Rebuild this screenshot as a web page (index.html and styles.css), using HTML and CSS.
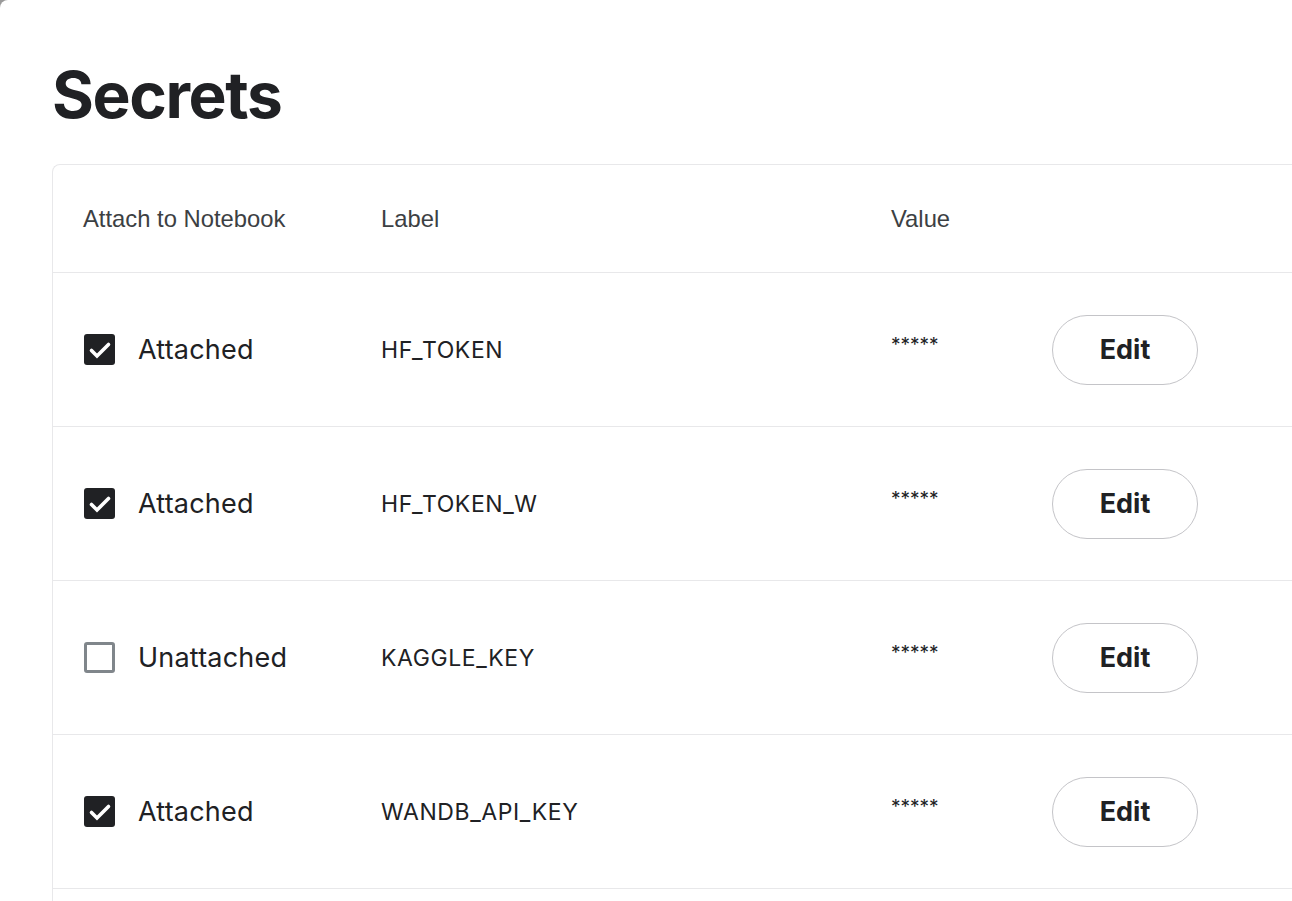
FILE: index.html
```html
<!DOCTYPE html>
<html>
<head>
<meta charset="utf-8">
<link rel="stylesheet" href="styles.css">
</head>
<body>
<div class="page">
  <h1 class="title">Secrets</h1>
  <div class="table">
    <div class="row head">
      <div class="cell">Attach to Notebook</div>
      <div class="cell">Label</div>
      <div class="cell">Value</div>
      <div class="cell"></div>
    </div>
    <div class="row">
      <div class="cell attach"><span class="box checked"><svg viewBox="0 0 30 30" width="30" height="30"><path d="M6.5 15.5 L12 21 L23.5 9.5" fill="none" stroke="#fff" stroke-width="3.6" stroke-linecap="round" stroke-linejoin="miter"/></svg></span><span class="state">Attached</span></div>
      <div class="cell label">HF_TOKEN</div>
      <div class="cell value">*****</div>
      <div class="cell"><button class="edit">Edit</button></div>
    </div>
    <div class="row">
      <div class="cell attach"><span class="box checked"><svg viewBox="0 0 30 30" width="30" height="30"><path d="M6.5 15.5 L12 21 L23.5 9.5" fill="none" stroke="#fff" stroke-width="3.6" stroke-linecap="round" stroke-linejoin="miter"/></svg></span><span class="state">Attached</span></div>
      <div class="cell label">HF_TOKEN_W</div>
      <div class="cell value">*****</div>
      <div class="cell"><button class="edit">Edit</button></div>
    </div>
    <div class="row">
      <div class="cell attach"><span class="box"></span><span class="state">Unattached</span></div>
      <div class="cell label">KAGGLE_KEY</div>
      <div class="cell value">*****</div>
      <div class="cell"><button class="edit">Edit</button></div>
    </div>
    <div class="row">
      <div class="cell attach"><span class="box checked"><svg viewBox="0 0 30 30" width="30" height="30"><path d="M6.5 15.5 L12 21 L23.5 9.5" fill="none" stroke="#fff" stroke-width="3.6" stroke-linecap="round" stroke-linejoin="miter"/></svg></span><span class="state">Attached</span></div>
      <div class="cell label">WANDB_API_KEY</div>
      <div class="cell value">*****</div>
      <div class="cell"><button class="edit">Edit</button></div>
    </div>
    <div class="row empty"></div>
  </div>
</div>
</body>
</html>
```

FILE: styles.css
```css
html, body {
  margin: 0;
  padding: 0;
  height: 100%;
  overflow: hidden;
  background: #9a9a9a;
}
.page {
  background: #fff;
  border-top-left-radius: 8px;
  min-height: 100%;
  padding: 60px 0 0 52px;
  box-sizing: border-box;
  font-family: Inter, "Liberation Sans", sans-serif;
  color: #202124;
}
.title {
  margin: 0 0 34px 0;
  font-size: 64px;
  line-height: 70px;
  font-weight: 700;
  letter-spacing: -1.4px;
  color: #202124;
}
.table {
  width: 1300px;
  border: 1px solid #e8e8ea;
  border-right: none;
  border-top-left-radius: 8px;
}
.row {
  display: grid;
  grid-template-columns: 298px 510px 161px 1fr;
  align-items: center;
  padding-left: 30px;
  height: 153px;
  border-bottom: 1px solid #e8e8ea;
}
.row.head {
  height: 107px;
}
.row.empty {
  height: 40px;
  border-bottom: none;
}
.head .cell {
  font-family: "Liberation Sans", Arial, sans-serif;
  font-size: 23.8px;
  color: #3c4043;
}
.attach {
  display: flex;
  align-items: center;
  gap: 23px;
  padding-left: 1px;
}
.box {
  width: 31px;
  height: 31px;
  box-sizing: border-box;
  border: 3px solid #80868b;
  border-radius: 3px;
  display: flex;
  align-items: center;
  justify-content: center;
}
.box.checked {
  border: none;
  background: #202124;
}
.box svg {
  display: block;
}
.state {
  font-size: 27px;
  color: #202124;
  letter-spacing: 0.2px;
}
.label {
  font-size: 23px;
  letter-spacing: 0.6px;
  color: #202124;
}
.value {
  font-size: 19px;
  color: #202124;
  padding-bottom: 10px;
}
.edit {
  width: 146px;
  height: 70px;
  border: 1px solid #c4c4c8;
  border-radius: 35px;
  background: #fff;
  font-family: Inter, "Liberation Sans", sans-serif;
  font-weight: 700;
  font-size: 27px;
  color: #202124;
  padding: 0;
  cursor: pointer;
}
```
